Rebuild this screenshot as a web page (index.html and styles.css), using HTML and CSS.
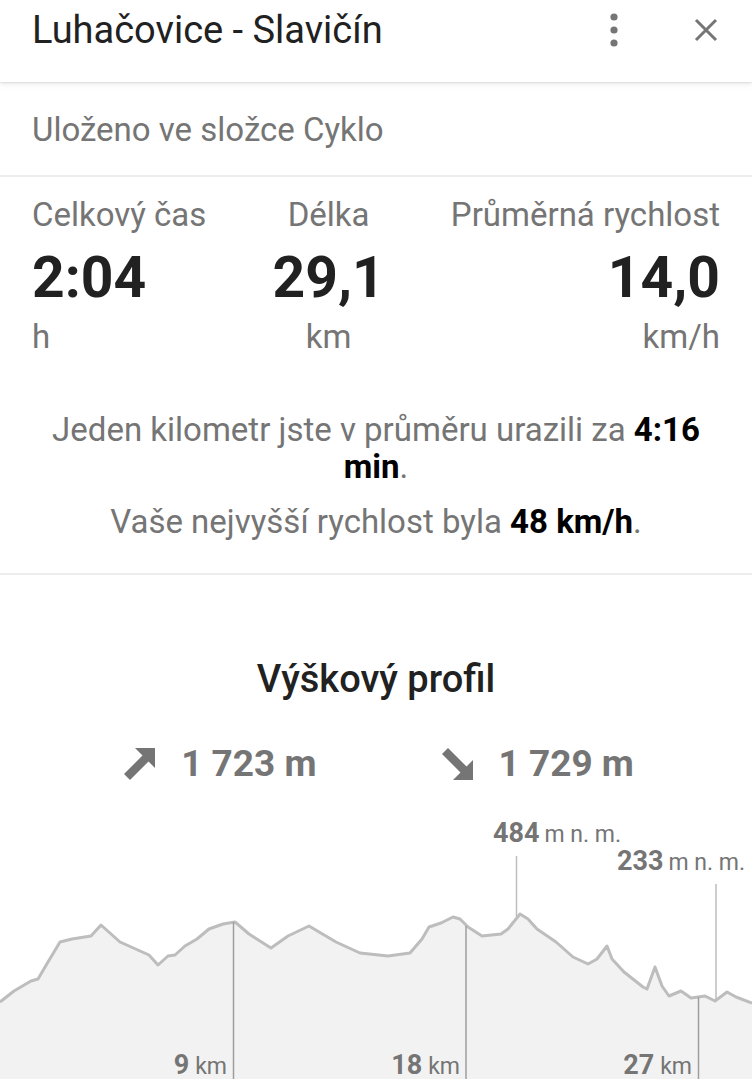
FILE: index.html
```html
<!DOCTYPE html>
<html>
  <head>
      <meta charset="utf-8">
      <title>Luhačovice - Slavičín</title>
      <link rel="stylesheet" href="styles.css">
  </head>
  <body>
      <div id="header">
          <div class="title">Luhačovice - Slavičín</div>
          <div class="actions">
            <svg class="ic-more" width="8" height="34" viewBox="0 0 8 34">
              <circle cx="4" cy="4" r="3.6"/>
              <circle cx="4" cy="17" r="3.6"/>
              <circle cx="4" cy="30" r="3.6"/>
            </svg>
            <svg class="ic-close" width="24" height="24" viewBox="0 0 24 24">
              <path d="M2 2L22 22M22 2L2 22"/>
            </svg>
          </div>
      </div>

      <div class="folder">Uloženo ve složce Cyklo</div>

      <div id="stats">
          <div class="col fleft">
            <div class="label">Celkový čas</div>
            <div class="value">2:04</div>
            <div class="unit">h</div>
          </div>
          <div class="col fmid">
            <div class="label">Délka</div>
            <div class="value">29,1</div>
            <div class="unit">km</div>
          </div>
          <div class="col fright">
            <div class="label">Průměrná rychlost</div>
            <div class="value">14,0</div>
            <div class="unit">km/h</div>
          </div>
      </div>

      <div class="summary">
          <p>Jeden kilometr jste v průměru urazili za <b>4:16 min</b>.</p>
          <p class="second">Vaše nejvyšší rychlost byla <b>48 km/h</b>.</p>
      </div>

      <div id="profile">
          <div class="ptitle">Výškový profil</div>
          <div class="climb">
            <div class="item">
              <svg width="32" height="32" viewBox="0 0 32 32">
                <path d="M11 0H31V20Z"/>
                <path d="M0 26L6 32L25 13L19 7Z"/>
              </svg>
              <span>1 723 m</span>
            </div>
            <div class="item">
              <svg width="32" height="32" viewBox="0 0 32 32">
                <path d="M11 32H31V12Z"/>
                <path d="M0 6L6 0L25 19L19 25Z"/>
              </svg>
              <span>1 729 m</span>
            </div>
          </div>
          <svg class="chart" width="752" height="280" viewBox="0 0 752 280">
            <path class="area" d="M0 203L14 192L31 182L38 180L48 163L60 143L72 140L91 137L101 126L120 143L149 156L158 166L168 157L175 156L185 147L197 140L209 130L223 125L235 123L249 135L271 149L288 137L309 127L336 143L360 154L388 157L410 154L422 140L429 128L441 124L453 118L460 120L468 128L482 137L501 135L508 130L520 115L528 120L537 130L556 143L573 158L588 165L597 160L607 147L612 160L624 173L643 188L647 190L655 168L662 187L669 197L681 192L691 199L705 197L715 202L727 193L736 198L752 204L752 280L0 280Z"/>
            <path class="line" d="M0 203L14 192L31 182L38 180L48 163L60 143L72 140L91 137L101 126L120 143L149 156L158 166L168 157L175 156L185 147L197 140L209 130L223 125L235 123L249 135L271 149L288 137L309 127L336 143L360 154L388 157L410 154L422 140L429 128L441 124L453 118L460 120L468 128L482 137L501 135L508 130L520 115L528 120L537 130L556 143L573 158L588 165L597 160L607 147L612 160L624 173L643 188L647 190L655 168L662 187L669 197L681 192L691 199L705 197L715 202L727 193L736 198L752 204"/>
            <line class="km" x1="233.5" y1="123" x2="233.5" y2="280"/>
            <line class="km" x1="466" y1="127" x2="466" y2="280"/>
            <line class="km" x1="698.5" y1="198" x2="698.5" y2="280"/>
            <line class="mark" x1="516.5" y1="57" x2="516.5" y2="117"/>
            <line class="mark" x1="716" y1="85" x2="716" y2="202"/>
            <text x="493" y="43"><tspan class="num">484</tspan><tspan class="sm" dx="5">m n. m.</tspan></text>
            <text x="617" y="71"><tspan class="num">233</tspan><tspan class="sm" dx="5">m n. m.</tspan></text>
            <text x="227" y="275" text-anchor="end"><tspan class="num">9</tspan><tspan class="sm" dx="6">km</tspan></text>
            <text x="460" y="275" text-anchor="end"><tspan class="num">18</tspan><tspan class="sm" dx="6">km</tspan></text>
            <text x="692" y="275" text-anchor="end"><tspan class="num">27</tspan><tspan class="sm" dx="6">km</tspan></text>
          </svg>
      </div>
  </body>
</html>
```

FILE: styles.css
```css
*{
  margin:0;
  padding:0;
}
body{
  width:752px;
  background:#fff;
  font-family:Roboto, "Noto Sans", sans-serif;
  color:#757575;
  overflow:hidden;
}
#header{
  height:82px;
  padding:0 34px 0 32px;
  display:flex;
  align-items:center;
  justify-content:space-between;
  position:relative;
  z-index:2;
  background:#fff;
  box-shadow:0 1px 2px rgba(0,0,0,0.10), 0 3px 6px rgba(0,0,0,0.06);
}
#header .title{
  font-size:38px;
  line-height:44px;
  color:#212121;
  margin-top:-22px;
}
#header .actions{
  display:flex;
  align-items:center;
  gap:76px;
  margin-top:-22px;
}
.ic-more circle{
  fill:#757575;
}
.ic-close path{
  stroke:#757575;
  stroke-width:3;
  fill:none;
}
.folder{
  height:91px;
  padding:0 32px;
  font-size:33px;
  line-height:91px;
  border-bottom:2px solid #ededed;
  margin-top:2px;
}
#stats{
  padding:18px 32px 0;
  display:flex;
  justify-content:space-between;
}
.col .label{
  font-size:33px;
  line-height:40px;
}
.col .value{
  font-size:57px;
  font-weight:700;
  line-height:64px;
  color:#212121;
  margin-top:11px;
}
.col .unit{
  font-size:33px;
  line-height:40px;
  margin-top:7px;
}
.fleft{
  text-align:left;
}
.fmid{
  text-align:center;
}
.fright{
  text-align:right;
}
.summary{
  padding:54px 32px 33px;
  text-align:center;
  font-size:33px;
  line-height:37px;
  border-bottom:2px solid #ededed;
}
.summary b{
  color:#000;
  font-weight:700;
}
.summary .second{
  margin-top:18px;
}
#profile{
  padding-top:83px;
}
.ptitle{
  text-align:center;
  font-size:38px;
  font-weight:500;
  line-height:42px;
  color:#212121;
}
.climb{
  margin-top:42px;
  display:flex;
  justify-content:center;
  gap:125px;
  padding-left:6px;
}
.climb .item{
  display:flex;
  align-items:center;
  gap:25px;
}
.climb svg path{
  fill:#757575;
}
.climb span{
  font-size:37px;
  font-weight:700;
  line-height:44px;
}
.chart{
  display:block;
  margin-top:13px;
}
.chart .area{
  fill:#f2f2f2;
}
.chart .line{
  fill:none;
  stroke:#bdbdbd;
  stroke-width:3;
  stroke-linejoin:round;
}
.chart .km{
  stroke:#9e9e9e;
  stroke-width:1.5;
}
.chart .mark{
  stroke:#bdbdbd;
  stroke-width:1.5;
}
.chart text{
  font-family:Roboto, "Noto Sans", sans-serif;
  fill:#757575;
}
.chart .num{
  font-size:27px;
  font-weight:700;
}
.chart .sm{
  font-size:23px;
}
```
